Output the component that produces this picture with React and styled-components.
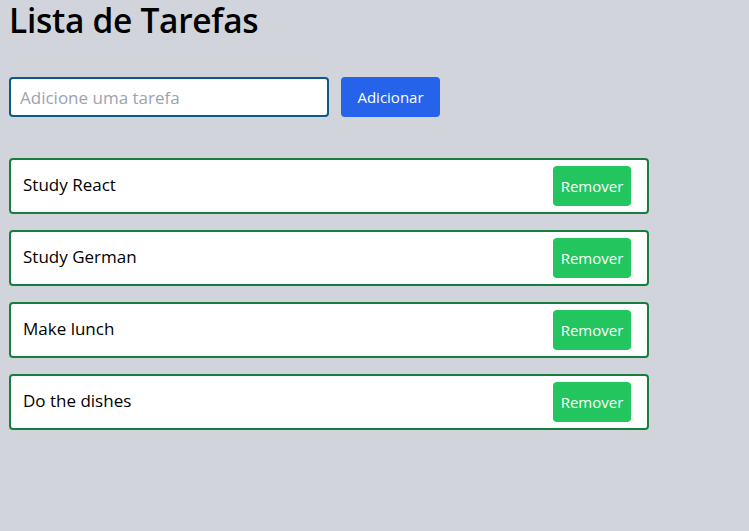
import React, { useState } from 'react';
import styled, { createGlobalStyle } from 'styled-components';

const GlobalStyle = createGlobalStyle`
  * {
    box-sizing: border-box;
  }

  body {
    margin: 0;
    background: #d1d5db;
    font-family: "Open Sans", "Noto Sans", sans-serif;
  }
`

const initialTasks = ['Study React', 'Study German', 'Make lunch', 'Do the dishes'];

const App = () => {

  const [tasks, setTasks] = useState(initialTasks);
  const [text, setText] = useState('');

  const addTask = () => {
    if (!text.trim()) return;
    setTasks([...tasks, text.trim()]);
    setText('');
  };

  const removeTask = (index) => setTasks(tasks.filter((_, i) => i !== index));

  return (
    <Page>
      <GlobalStyle />
      <Title>Lista de Tarefas</Title>

      <Form onSubmit={(e) => { e.preventDefault(); addTask(); }}>
        <Input
          placeholder='Adicione uma tarefa'
          value={text}
          onChange={(e) => setText(e.target.value)}
        />
        <AddButton type='submit'>Adicionar</AddButton>
      </Form>

      <List>
        {tasks.map((task, index) => (
          <Item key={task + index}>
            <ItemText>{task}</ItemText>
            <RemoveButton onClick={() => removeTask(index)}>Remover</RemoveButton>
          </Item>
        ))}
      </List>
    </Page>
  );

};

const Page = styled.div`
  min-height: 531px;
  padding: 0 9px;
`

const Title = styled.h1`
  margin: 0;
  padding-top: 1px;
  font-size: 33.5px;
  line-height: 39px;
  font-weight: 600;
  color: #000;
  letter-spacing: -0.3px;
`

const Form = styled.form`
  display: flex;
  align-items: center;
  gap: 12px;
  margin-top: 37px;
`

const Input = styled.input`
  width: 320px;
  height: 40px;
  padding: 0 9px;
  border: 2px solid #0c5a87;
  border-radius: 4px;
  background: #fff;
  font-family: inherit;
  font-size: 17px;
  color: #111;
  outline: none;

  &::placeholder {
    color: #9ca3af;
  }
`

const AddButton = styled.button`
  width: 99px;
  height: 40px;
  border: none;
  border-radius: 4px;
  background: #2563eb;
  color: #fff;
  font-family: inherit;
  font-size: 15px;
  cursor: pointer;
`

const List = styled.ul`
  list-style: none;
  margin: 41px 0 0;
  padding: 0;
  display: flex;
  flex-direction: column;
  gap: 16px;
  width: 640px;
`

const Item = styled.li`
  display: flex;
  align-items: center;
  justify-content: space-between;
  height: 56px;
  padding: 0 16px 0 12px;
  background: #fff;
  border: 2px solid #15803d;
  border-radius: 4px;
`

const ItemText = styled.span`
  font-size: 17px;
  color: #000;
  margin-top: -3px;
`

const RemoveButton = styled.button`
  width: 78px;
  height: 40px;
  border: none;
  border-radius: 4px;
  background: #22c55e;
  color: #fff;
  font-family: inherit;
  font-size: 15px;
  cursor: pointer;
`

export default App;
